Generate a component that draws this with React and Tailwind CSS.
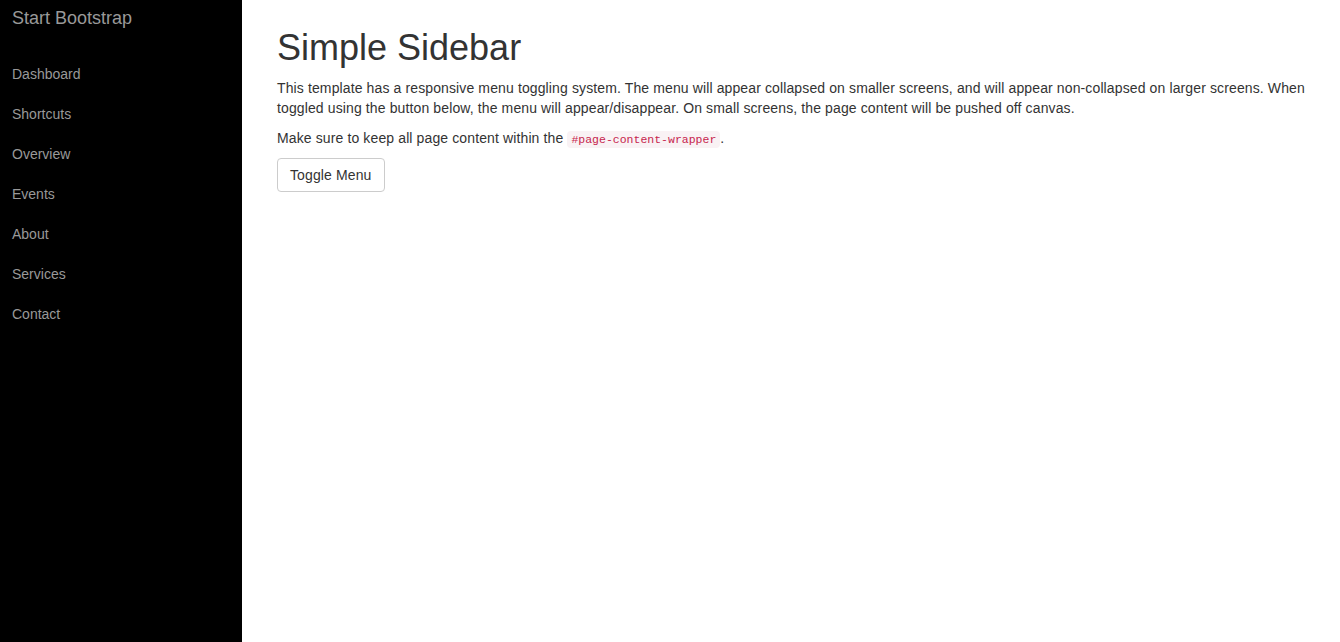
const links = ["Dashboard", "Shortcuts", "Overview", "Events", "About", "Services", "Contact"];

export default function App() {
  return (
    <div className="flex min-h-[642px] bg-white font-['Liberation_Sans',Arial,sans-serif] text-[14px] leading-[20px] text-[#333]">
      <aside className="w-[242px] shrink-0 bg-black">
        <div className="h-[36px] pl-[12px] text-[18px] leading-[37px] text-[#999]">Start Bootstrap</div>
        <ul className="mt-[18px]">
          {links.map((l) => (
            <li key={l}>
              <a href="#" className="block pl-[12px] leading-[40px] text-[#999]">
                {l}
              </a>
            </li>
          ))}
        </ul>
      </aside>
      <main className="flex-1 px-[35px] pt-[28px]">
        <h1 className="mb-[10px] text-[36px] leading-[39.6px] font-normal text-[#333]">Simple Sidebar</h1>
        <p className="mb-[10px] tracking-[0.12px]">
          This template has a responsive menu toggling system. The menu will appear collapsed on smaller screens, and will appear non-collapsed on larger screens. When toggled using the button below, the menu will appear/disappear. On small screens, the page content will be pushed off canvas.
        </p>
        <p className="mb-[10px] tracking-[0.12px]">
          Make sure to keep all page content within the{" "}
          <code className="rounded-[4px] bg-[#f9f2f4] px-[4px] py-[2px] font-['Liberation_Mono',monospace] text-[11.5px] leading-none tracking-normal text-[#c7254e]">
            #page-content-wrapper
          </code>
          .
        </p>
        <button className="h-[34px] rounded-[4px] border border-[#ccc] bg-white px-[12px] text-[14px] leading-[20px] tracking-[0.12px] text-[#333]">
          Toggle Menu
        </button>
      </main>
    </div>
  );
}
